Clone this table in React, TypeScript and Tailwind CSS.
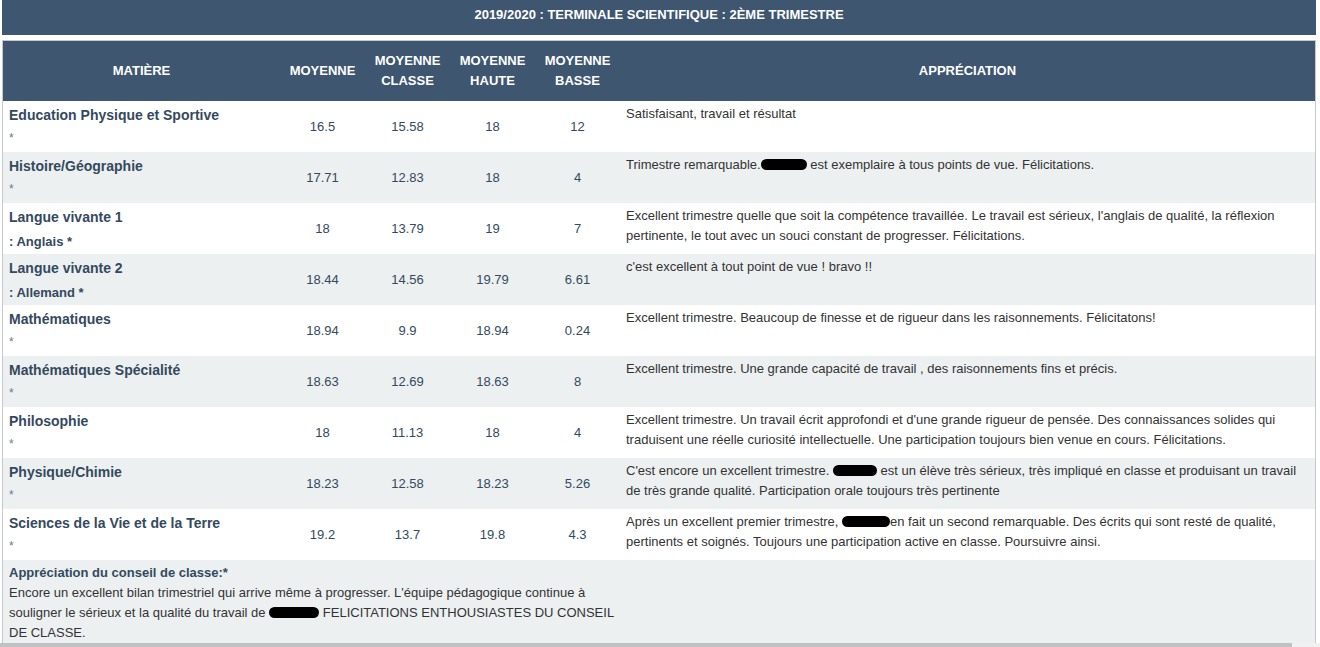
type Row = {
  name: string;
  sub: string;
  moy: string;
  classe: string;
  haute: string;
  basse: string;
  text: React.ReactNode;
};

function Blot({ w }: { w: number }) {
  return (
    <span
      className="inline-block h-[11px] rounded-[6px] bg-black align-[-1px]"
      style={{ width: w }}
    />
  );
}

const rows: Row[] = [
  {
    name: "Education Physique et Sportive",
    sub: "*",
    moy: "16.5",
    classe: "15.58",
    haute: "18",
    basse: "12",
    text: "Satisfaisant, travail et résultat",
  },
  {
    name: "Histoire/Géographie",
    sub: "*",
    moy: "17.71",
    classe: "12.83",
    haute: "18",
    basse: "4",
    text: (
      <>
        Trimestre remarquable.
        <Blot w={46} /> est exemplaire à tous points de vue. Félicitations.
      </>
    ),
  },
  {
    name: "Langue vivante 1",
    sub: ": Anglais *",
    moy: "18",
    classe: "13.79",
    haute: "19",
    basse: "7",
    text: "Excellent trimestre quelle que soit la compétence travaillée. Le travail est sérieux, l'anglais de qualité, la réflexion pertinente, le tout avec un souci constant de progresser. Félicitations.",
  },
  {
    name: "Langue vivante 2",
    sub: ": Allemand *",
    moy: "18.44",
    classe: "14.56",
    haute: "19.79",
    basse: "6.61",
    text: "c'est excellent à tout point de vue ! bravo !!",
  },
  {
    name: "Mathématiques",
    sub: "*",
    moy: "18.94",
    classe: "9.9",
    haute: "18.94",
    basse: "0.24",
    text: "Excellent trimestre. Beaucoup de finesse et de rigueur dans les raisonnements. Félicitatons!",
  },
  {
    name: "Mathématiques Spécialité",
    sub: "*",
    moy: "18.63",
    classe: "12.69",
    haute: "18.63",
    basse: "8",
    text: "Excellent trimestre. Une grande capacité de travail , des raisonnements fins et précis.",
  },
  {
    name: "Philosophie",
    sub: "*",
    moy: "18",
    classe: "11.13",
    haute: "18",
    basse: "4",
    text: "Excellent trimestre. Un travail écrit approfondi et d'une grande rigueur de pensée. Des connaissances solides qui traduisent une réelle curiosité intellectuelle. Une participation toujours bien venue en cours. Félicitations.",
  },
  {
    name: "Physique/Chimie",
    sub: "*",
    moy: "18.23",
    classe: "12.58",
    haute: "18.23",
    basse: "5.26",
    text: (
      <>
        C'est encore un excellent trimestre. <Blot w={44} /> est un élève très sérieux, très
        impliqué en classe et produisant un travail de très grande qualité. Participation orale
        toujours très pertinente
      </>
    ),
  },
  {
    name: "Sciences de la Vie et de la Terre",
    sub: "*",
    moy: "19.2",
    classe: "13.7",
    haute: "19.8",
    basse: "4.3",
    text: (
      <>
        Après un excellent premier trimestre, <Blot w={48} />
        en fait un second remarquable. Des écrits qui sont resté de qualité, pertinents et
        soignés. Toujours une participation active en classe. Poursuivre ainsi.
      </>
    ),
  },
];

export default function App() {
  return (
    <div className="min-h-[647px] bg-white font-['Liberation_Sans',Arial,sans-serif] text-[13px] leading-[20px] text-[#34495e]">
      <div className="ml-[2px] w-[1314px]">
        <div className="h-[35px] bg-[#3e5670] pt-[5px] text-center font-bold text-white">
          2019/2020 : TERMINALE SCIENTIFIQUE : 2ÈME TRIMESTRE
        </div>
        <div className="mt-[5px] border-x border-t border-[#c4c9d0]">
          <table className="w-full table-fixed border-collapse">
            <colgroup>
              <col className="w-[277px]" />
              <col className="w-[85px]" />
              <col className="w-[85px]" />
              <col className="w-[85px]" />
              <col className="w-[85px]" />
              <col />
            </colgroup>
            <thead>
              <tr className="h-[60px] bg-[#3e5670] font-bold text-white">
                <th>MATIÈRE</th>
                <th>MOYENNE</th>
                <th>
                  MOYENNE
                  <br />
                  CLASSE
                </th>
                <th>
                  MOYENNE
                  <br />
                  HAUTE
                </th>
                <th>
                  MOYENNE
                  <br />
                  BASSE
                </th>
                <th>APPRÉCIATION</th>
              </tr>
            </thead>
            <tbody>
              {rows.map((r, i) => (
                <tr key={r.name} className={i % 2 === 1 ? "h-[51px] bg-[#ecf0f1]" : "h-[51px] bg-white"}>
                  <td className="px-[6px] pt-[4px] align-top">
                    <div className="text-[14px] font-bold">{r.name}</div>
                    {r.sub === "*" ? (
                      <div className="mt-[3px] text-[12px] text-[#6b7a88]">*</div>
                    ) : (
                      <div className="mt-[5px] font-bold">{r.sub}</div>
                    )}
                  </td>
                  <td className="text-center">{r.moy}</td>
                  <td className="text-center">{r.classe}</td>
                  <td className="text-center">{r.haute}</td>
                  <td className="text-center">{r.basse}</td>
                  <td className="px-[6px] pt-[3px] align-top text-[#333]">{r.text}</td>
                </tr>
              ))}
              <tr className="h-[83px] bg-[#ecf0f1]">
                <td colSpan={5} className="px-[6px] pt-[3px] align-top text-[#333]">
                  <div className="font-bold text-[#34495e]">Appréciation du conseil de classe:*</div>
                  <div>
                    Encore un excellent bilan trimestriel qui arrive même à progresser. L'équipe
                    pédagogique continue à souligner le sérieux et la qualité du travail de{" "}
                    <Blot w={50} /> FELICITATIONS ENTHOUSIASTES DU CONSEIL DE CLASSE.
                  </div>
                </td>
                <td />
              </tr>
            </tbody>
          </table>
        </div>
      </div>
      <div className="flex h-[6px]">
        <div className="w-[1292px] bg-[#c1c1c1]" />
        <div className="flex-1 bg-[#f1f1f1]" />
      </div>
    </div>
  );
}
